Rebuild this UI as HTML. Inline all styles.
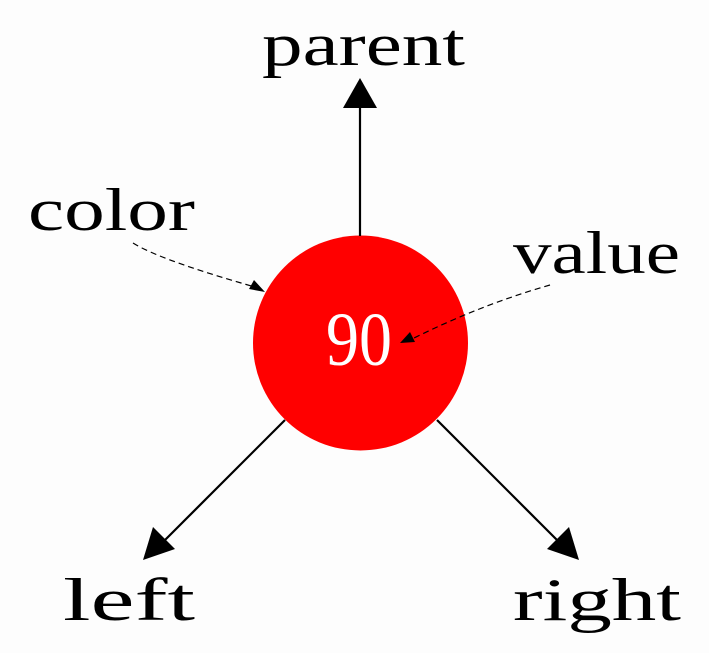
<!DOCTYPE html>
<html><head><style>
html,body{margin:0;padding:0;background:#fff;}
svg{display:block}
</style></head><body>
<svg width="709" height="653" viewBox="0 0 709 653" xmlns="http://www.w3.org/2000/svg">
<rect width="709" height="653" fill="#fdfdfd"/>
<circle cx="360.5" cy="343" r="107.5" fill="#ff0000"/>
<g stroke="#000" stroke-width="2.2" fill="none">
<line x1="360" y1="236" x2="360" y2="104"/>
<line x1="285" y1="420" x2="165" y2="540"/>
<line x1="437" y1="420" x2="557" y2="540"/>
</g>
<polygon points="360,78 343,108 377,108" fill="#000"/>
<polygon points="143,560 153,527 175,549" fill="#000"/>
<polygon points="579,560 547,549 569,527" fill="#000"/>
<g stroke="#000" stroke-width="1.2" fill="none" stroke-dasharray="6,4">
<path d="M133,243 Q160,260 255,287"/>
<path d="M550,285 Q480,305 410,340"/>
</g>
<polygon points="265,292 249,289 254,280" fill="#000"/>
<polygon points="400,343 410,332 415,342" fill="#000"/>
<g font-family="'Liberation Serif', serif" font-size="60" fill="#000">
<text x="262" y="65" textLength="203" lengthAdjust="spacingAndGlyphs">parent</text>
<text x="28" y="230" textLength="167" lengthAdjust="spacingAndGlyphs">color</text>
<text x="513" y="273" textLength="167" lengthAdjust="spacingAndGlyphs">value</text>
<text x="63" y="620" textLength="132" lengthAdjust="spacingAndGlyphs">left</text>
<text x="513" y="620" textLength="168" lengthAdjust="spacingAndGlyphs">right</text>
</g>
<text x="326" y="365" font-family="'Liberation Serif', serif" font-size="76" fill="#fff" textLength="66" lengthAdjust="spacingAndGlyphs">90</text>
</svg>
</body></html>
